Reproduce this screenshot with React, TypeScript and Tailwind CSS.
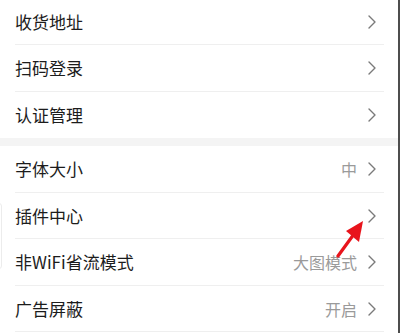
import { ChevronRight } from "lucide-react";

type Row = { label: string; value?: string; h: string; line: boolean };

const group1: Row[] = [
  { label: "收货地址", h: "h-[45px]", line: true },
  { label: "扫码登录", h: "h-[47px]", line: true },
  { label: "认证管理", h: "h-[46px]", line: false },
];

const group2: Row[] = [
  { label: "字体大小", value: "中", h: "h-[47px]", line: true },
  { label: "插件中心", h: "h-[46px]", line: true },
  { label: "非WiFi省流模式", value: "大图模式", h: "h-[47px]", line: true },
  { label: "广告屏蔽", value: "开启", h: "h-[46px]", line: true },
];

function SettingRow({ row }: { row: Row }) {
  return (
    <div className="pl-[15px] pr-[14px]">
      <div
        className={`flex items-center justify-between ${row.h} ${row.line ? "border-b border-[#efefef]" : ""}`}
      >
        <span className="text-[17px] text-[#1c1c1c]">{row.label}</span>
        <div className="flex items-center gap-[3px]">
          {row.value && <span className="text-[16px] text-[#9a9a9a]">{row.value}</span>}
          <ChevronRight className="h-[24px] w-[24px] text-[#7a7a7a]" strokeWidth={1.4} />
        </div>
      </div>
    </div>
  );
}

export default function App() {
  return (
    <div
      className="relative h-[333px] w-[400px] overflow-hidden border-r-2 border-[#4d4d4d] bg-white"
      style={{ fontFamily: '"Noto Sans CJK SC", "Noto Sans", sans-serif' }}
    >
      {group1.map((r) => (
        <SettingRow key={r.label} row={r} />
      ))}
      <div className="h-[8px] bg-[#f4f4f4]" />
      {group2.map((r) => (
        <SettingRow key={r.label} row={r} />
      ))}

      {/* edge handle on the left */}
      <div className="absolute left-[-4px] top-[203px] h-[66px] w-[6px] rounded-[3px] border border-[#ececec]" />

      {/* red annotation arrow */}
      <svg className="absolute left-0 top-0" width="400" height="333" viewBox="0 0 400 333">
        <line x1="338" y1="256" x2="354" y2="234" stroke="#e8141c" strokeWidth="3.2" strokeLinecap="round" />
        <polygon points="363,221 346,231 359,242" fill="#e8141c" />
      </svg>
    </div>
  );
}
